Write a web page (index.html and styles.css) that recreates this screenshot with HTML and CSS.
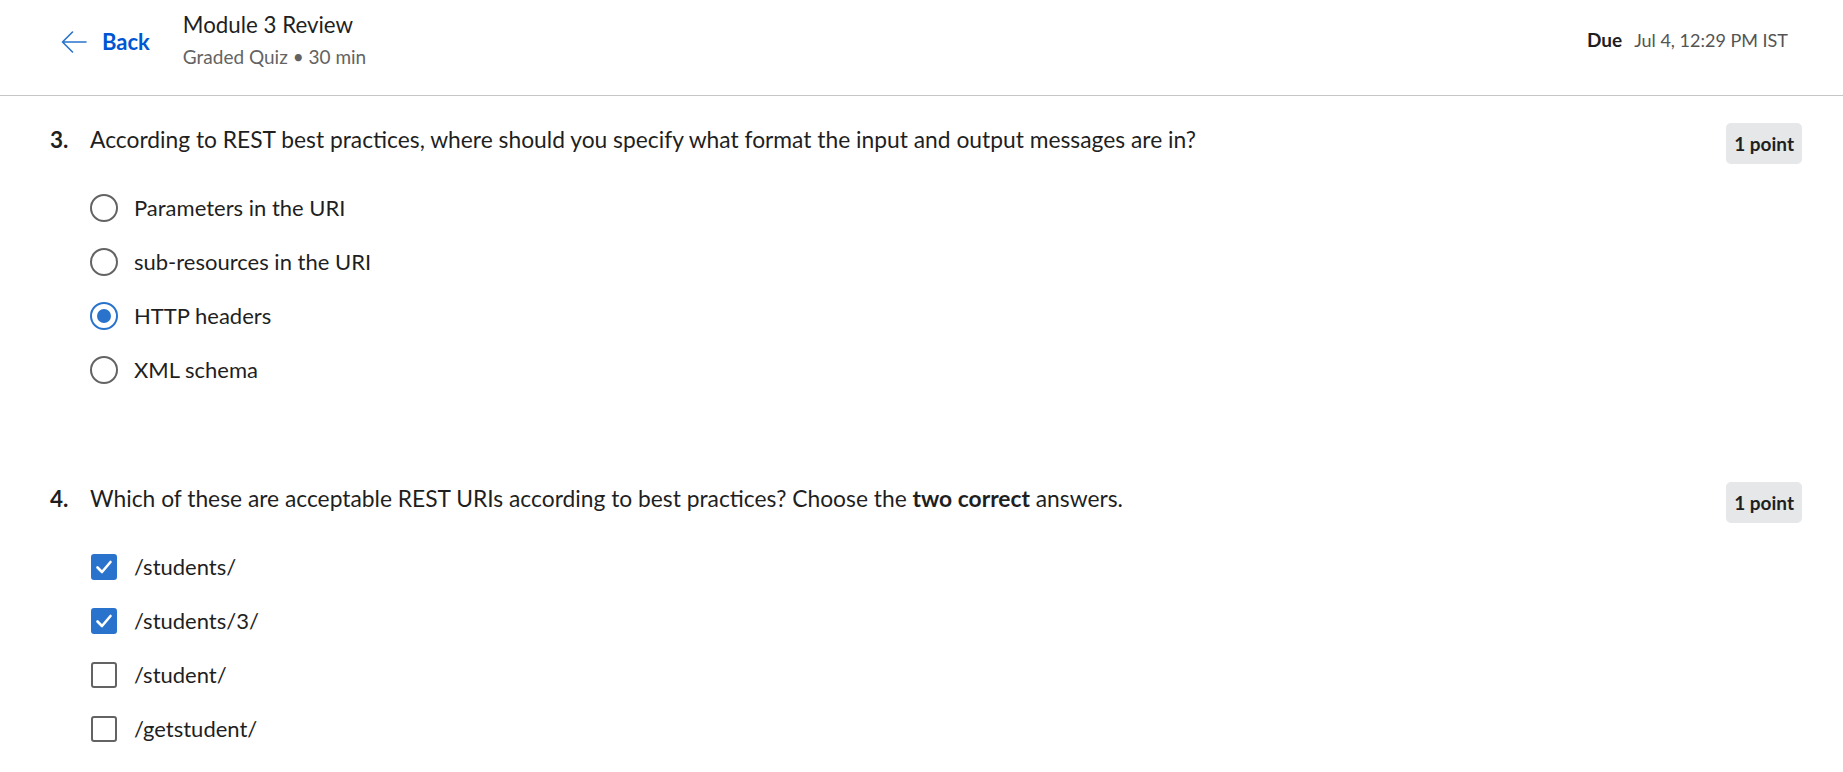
FILE: index.html
```html
<!DOCTYPE html>
<html lang="en">
<head>
<meta charset="utf-8">
<title>Module 3 Review</title>
<link rel="stylesheet" href="styles.css">
</head>
<body>
<header class="topbar">
  <a class="back" href="#">
    <svg class="back-icon" width="26" height="22" viewBox="0 0 26 22" aria-hidden="true">
      <path d="M25 11H2 M11.5 1L1.5 11l10 10" fill="none" stroke="#2a73cc" stroke-width="1.6" stroke-linecap="round" stroke-linejoin="round"/>
    </svg>
    <span>Back</span>
  </a>
  <div class="title-block">
    <div class="title">Module 3 Review</div>
    <div class="meta">Graded Quiz • 30 min</div>
  </div>
  <div class="due"><strong>Due</strong><span>Jul 4, 12:29 PM IST</span></div>
</header>

<main class="quiz">
  <section class="question">
    <div class="q-head">
      <span class="q-num">3.</span>
      <p class="q-text">According to REST best practices, where should you specify what format the input and output messages are in?</p>
      <span class="points">1 point</span>
    </div>
    <ul class="options">
      <li class="option"><span class="radio"></span><span class="opt-label">Parameters in the URI</span></li>
      <li class="option"><span class="radio"></span><span class="opt-label">sub-resources in the URI</span></li>
      <li class="option"><span class="radio checked"></span><span class="opt-label">HTTP headers</span></li>
      <li class="option"><span class="radio"></span><span class="opt-label">XML schema</span></li>
    </ul>
  </section>

  <section class="question">
    <div class="q-head">
      <span class="q-num">4.</span>
      <p class="q-text">Which of these are acceptable REST URIs according to best practices? Choose the <strong>two correct</strong> answers.</p>
      <span class="points">1 point</span>
    </div>
    <ul class="options">
      <li class="option"><span class="checkbox checked"><svg width="18" height="16" viewBox="0 0 18 16"><path d="M2.5 8.5l4.5 4.5L15.5 3" fill="none" stroke="#fff" stroke-width="2.6" stroke-linecap="round" stroke-linejoin="round"/></svg></span><span class="opt-label">/students/</span></li>
      <li class="option"><span class="checkbox checked"><svg width="18" height="16" viewBox="0 0 18 16"><path d="M2.5 8.5l4.5 4.5L15.5 3" fill="none" stroke="#fff" stroke-width="2.6" stroke-linecap="round" stroke-linejoin="round"/></svg></span><span class="opt-label">/students/3/</span></li>
      <li class="option"><span class="checkbox"></span><span class="opt-label">/student/</span></li>
      <li class="option"><span class="checkbox"></span><span class="opt-label">/getstudent/</span></li>
    </ul>
  </section>
</main>
</body>
</html>
```

FILE: styles.css
```css
* { box-sizing: border-box; }

html, body {
  margin: 0;
  padding: 0;
  background: #ffffff;
  font-family: Lato, "Liberation Sans", sans-serif;
  color: #1f1f1f;
}

.topbar {
  display: flex;
  align-items: flex-start;
  height: 96px;
  border-bottom: 1px solid #c6c6c6;
  padding: 10px 55px 0 61px;
}

.back {
  display: flex;
  align-items: center;
  gap: 15px;
  margin-top: 21px;
  text-decoration: none;
  color: #0056d2;
  font-weight: 700;
  font-size: 22px;
  line-height: 22px;
}

.back-icon { display: block; }

.title-block {
  margin-left: 33px;
  display: flex;
  flex-direction: column;
}

.title {
  font-size: 22.3px;
  line-height: 30px;
  color: #1f1f1f;
}

.meta {
  margin-top: 4px;
  font-size: 19px;
  line-height: 26px;
  color: #636363;
}

.due {
  margin-left: auto;
  margin-top: 17px;
  display: flex;
  gap: 12px;
  font-size: 18px;
  line-height: 26px;
  color: #545454;
}

.due strong {
  color: #1f1f1f;
  font-weight: 700;
  font-size: 19px;
}

.quiz {
  padding: 27px 41px 0 50px;
}

.question + .question {
  margin-top: 85px;
}

.q-head {
  display: flex;
  align-items: center;
  min-height: 41px;
}

.q-num {
  width: 40px;
  flex: none;
  font-weight: 700;
  font-size: 22.5px;
  margin-top: -9px;
}

.q-text {
  margin: -9px 0 0;
  flex: 1;
  font-size: 22.8px;
  line-height: 30px;
}

.points {
  flex: none;
  background: #e5e7e8;
  border-radius: 5px;
  height: 41px;
  padding: 0 8px;
  display: flex;
  align-items: center;
  font-weight: 700;
  font-size: 19px;
  color: #1f1f1f;
}

.options {
  list-style: none;
  margin: 17px 0 0;
  padding: 0 0 0 40px;
}

.option {
  display: flex;
  align-items: center;
  height: 54px;
}

.opt-label {
  font-size: 22px;
  line-height: 30px;
  margin-left: 16px;
}

.radio {
  width: 28px;
  height: 28px;
  border-radius: 50%;
  border: 2.5px solid #636363;
  flex: none;
  display: flex;
  align-items: center;
  justify-content: center;
}

.radio.checked {
  border-color: #2a73cc;
}

.radio.checked::after {
  content: "";
  width: 14px;
  height: 14px;
  border-radius: 50%;
  background: #2a73cc;
}

.checkbox {
  width: 26px;
  height: 26px;
  border-radius: 3px;
  border: 2.5px solid #636363;
  flex: none;
  margin-left: 1px;
  margin-right: 1px;
  display: flex;
  align-items: center;
  justify-content: center;
}

.checkbox.checked {
  background: #2a73cc;
  border-color: #2a73cc;
}
```
